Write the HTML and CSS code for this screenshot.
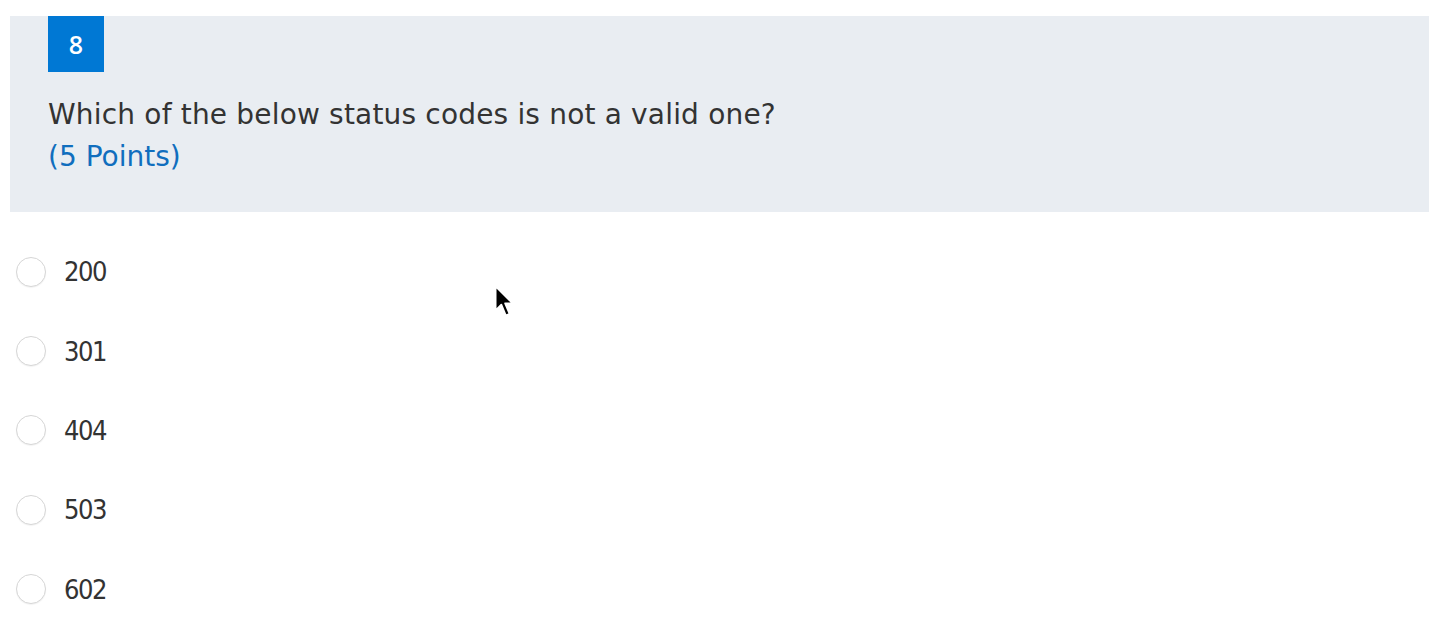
FILE: index.html
```html
<!DOCTYPE html>
<html>
<head>
<meta charset="utf-8">
<link rel="stylesheet" href="styles.css">
</head>
<body>
<div class="page">
  <section class="question">
    <div class="badge">8</div>
    <div class="title">Which of the below status codes is not a valid one?</div>
    <div class="points">(5 Points)</div>
  </section>
  <ul class="choices">
    <li class="choice"><span class="radio"></span><span class="label">200</span></li>
    <li class="choice"><span class="radio"></span><span class="label">301</span></li>
    <li class="choice"><span class="radio"></span><span class="label">404</span></li>
    <li class="choice"><span class="radio"></span><span class="label">503</span></li>
    <li class="choice"><span class="radio"></span><span class="label">602</span></li>
  </ul>
  <svg class="cursor" width="21" height="33" viewBox="0 0 16 26">
    <path d="M1 1 L1 20 L5.5 15.5 L9 24 L12 22.7 L8.5 14.5 L14.5 14.5 Z" fill="#000" stroke="#fff" stroke-width="1.4" stroke-linejoin="round"/>
  </svg>
</div>
</body>
</html>
```
FILE: styles.css
```css
html, body {
  margin: 0;
  padding: 0;
  background: #fff;
}
.page {
  position: relative;
  width: 1448px;
  height: 624px;
  overflow: hidden;
  font-family: "DejaVu Sans", "Open Sans", sans-serif;
  color: #333;
}
.question {
  margin: 16px 19px 0 10px;
  height: 196px;
  background: #e9edf2;
  padding: 0 38px;
  box-sizing: border-box;
}
.badge {
  width: 56px;
  height: 56px;
  background: #0078d4;
  color: #fff;
  font-family: "Open Sans", sans-serif;
  font-weight: 600;
  font-size: 25px;
  display: flex;
  align-items: center;
  justify-content: center;
}
.title {
  margin-top: 22px;
  font-size: 28px;
  line-height: 42px;
  letter-spacing: 0.18px;
  color: #333;
}
.points {
  font-size: 28px;
  line-height: 42px;
  color: #106ebe;
}
.choices {
  list-style: none;
  margin: 0;
  padding: 0 0 0 16px;
}
.choice {
  display: flex;
  align-items: center;
  height: 79.4px;
}
.choice:first-child {
  margin-top: 20px;
}
.radio {
  width: 28px;
  height: 28px;
  border: 1px solid #d6d6d6;
  border-radius: 50%;
  background: #fff;
  box-shadow: 0 1px 1px rgba(0,0,0,0.05);
}
.label {
  margin-left: 18px;
  font-family: "DejaVu Sans Condensed", "DejaVu Sans", sans-serif;
  font-size: 27px;
  letter-spacing: -1.4px;
  color: #333;
}
.cursor {
  position: absolute;
  left: 494px;
  top: 285px;
}
```
